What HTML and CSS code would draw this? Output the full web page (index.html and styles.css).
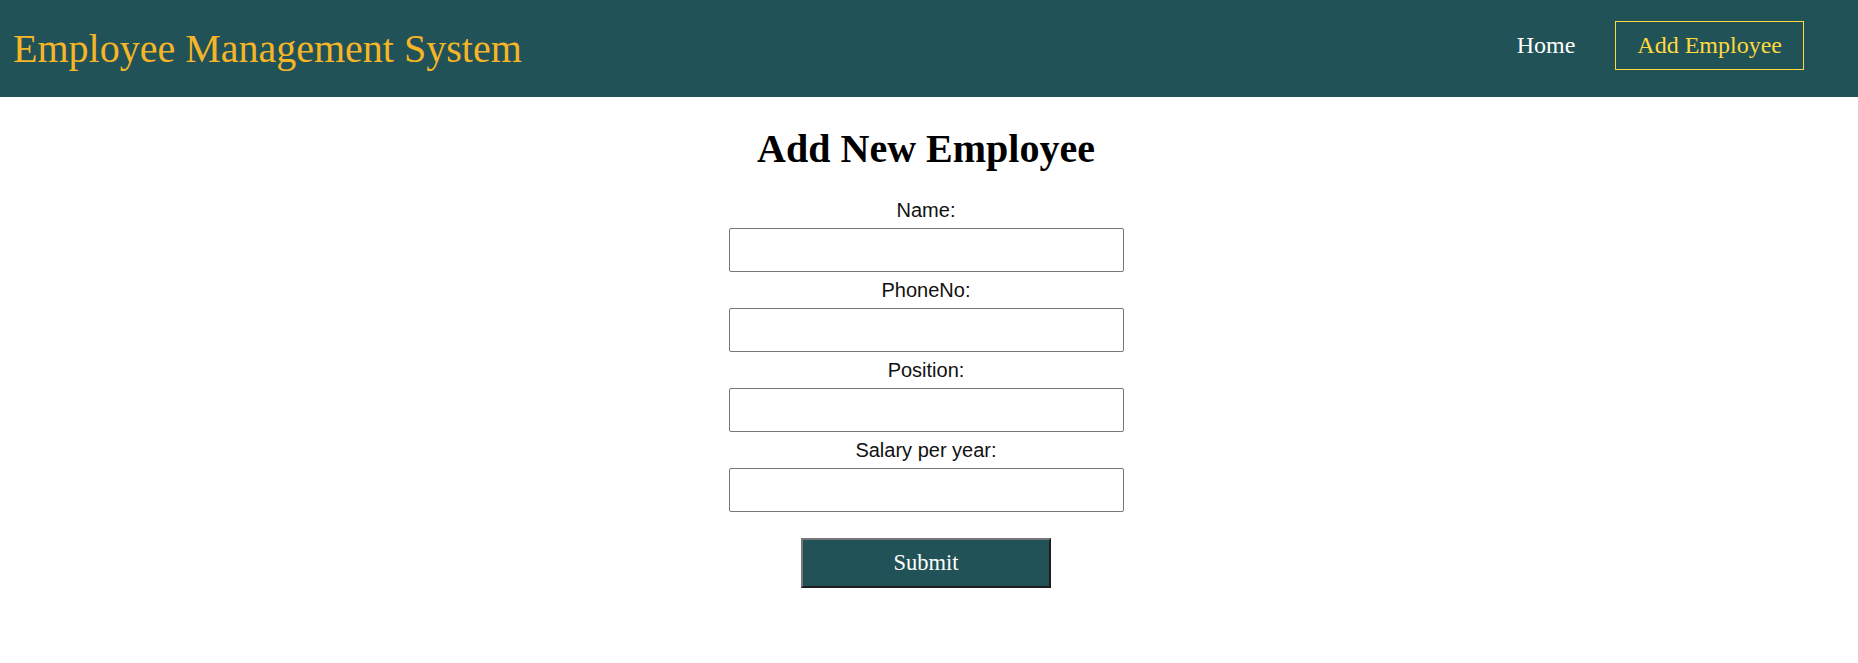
FILE: index.html
```html
<!DOCTYPE html>
<html lang="en">
<head>
<meta charset="utf-8">
<title>Employee Management System</title>
<link rel="stylesheet" href="styles.css">
</head>
<body>
<header class="topbar">
  <div class="brand">Employee Management System</div>
  <nav class="nav">
    <a class="nav-link" href="#">Home</a>
    <a class="nav-link nav-link--active" href="#">Add Employee</a>
  </nav>
</header>
<main class="page">
  <h1 class="page-title">Add New Employee</h1>
  <form class="emp-form">
    <label class="field-label" for="name">Name:</label>
    <input class="field-input" id="name" type="text">
    <label class="field-label" for="phone">PhoneNo:</label>
    <input class="field-input" id="phone" type="text">
    <label class="field-label" for="position">Position:</label>
    <input class="field-input" id="position" type="text">
    <label class="field-label" for="salary">Salary per year:</label>
    <input class="field-input" id="salary" type="text">
    <button class="submit-btn" type="button">Submit</button>
  </form>
</main>
</body>
</html>
```

FILE: styles.css
```css
html, body {
  margin: 0;
  padding: 0;
  background: #ffffff;
}

body {
  font-family: "Liberation Serif", "Times New Roman", serif;
  color: #000;
}

.topbar {
  height: 97px;
  box-sizing: border-box;
  background: #215257;
  display: flex;
  align-items: center;
  justify-content: space-between;
  padding: 0 54px 0 13px;
}

.brand {
  font-family: "Liberation Serif", "Times New Roman", serif;
  font-size: 40px;
  line-height: normal;
  color: #f6b526;
}

.nav {
  display: flex;
  align-items: center;
  gap: 18px;
  margin-bottom: 7px;
}

.nav-link {
  font-family: "Liberation Serif", "Times New Roman", serif;
  font-size: 24px;
  line-height: normal;
  color: #ffffff;
  text-decoration: none;
  padding: 10px 21px;
  border: 1px solid transparent;
}

.nav-link--active {
  color: #fdd83f;
  border-color: #fdd83f;
}

.page {
  display: flex;
  flex-direction: column;
  align-items: center;
  padding-right: 6px;
}

.page-title {
  font-family: "Liberation Serif", "Times New Roman", serif;
  font-size: 40px;
  font-weight: bold;
  line-height: normal;
  margin: 28px 0 27px;
}

.emp-form {
  display: flex;
  flex-direction: column;
  align-items: center;
}

.field-label {
  display: block;
  font-family: "Liberation Sans", Arial, sans-serif;
  font-size: 20px;
  line-height: 23px;
  color: #111;
  margin-top: 7px;
}

.field-label:first-child {
  margin-top: 0;
}

.field-input {
  display: block;
  box-sizing: border-box;
  width: 395px;
  height: 44px;
  margin: 6px 0 0;
  border: 1px solid #767676;
  border-radius: 2px;
  background: #fff;
  font-size: 18px;
}

.submit-btn {
  margin-top: 26px;
  box-sizing: border-box;
  width: 250px;
  height: 50px;
  background: #215257;
  color: #ffffff;
  font-family: "Liberation Serif", "Times New Roman", serif;
  font-size: 22.5px;
  border-style: solid;
  border-width: 2px;
  border-color: #767676 #1e1e1e #1e1e1e #767676;
  padding: 0;
}
```
